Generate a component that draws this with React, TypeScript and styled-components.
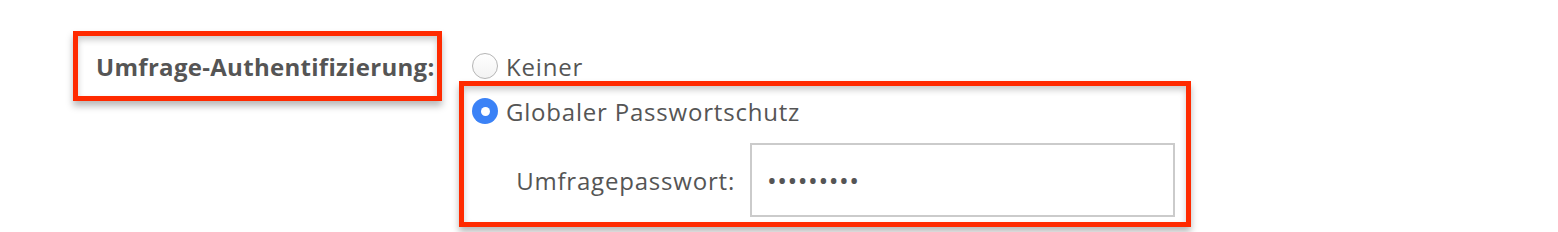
import React from 'react'
import styled, { createGlobalStyle } from 'styled-components'

const GlobalStyle = createGlobalStyle`
  html, body {
    margin: 0;
    padding: 0;
    background: #fff;
  }
  body {
    font-family: 'Open Sans', 'Noto Sans', Arial, sans-serif;
    color: #555;
  }
`

const Page = styled.div`
  width: 1558px;
  height: 232px;
  padding: 31px 0 0 73px;
  box-sizing: border-box;
  display: flex;
  align-items: flex-start;
`

// red annotation frame with its drop shadow
const Frame = styled.div`
  border: 5px solid #ff2a00;
  box-shadow: 0 5px 7px rgba(0, 0, 0, 0.28), inset 0 4px 6px rgba(0, 0, 0, 0.2);
  box-sizing: border-box;
`

const LabelFrame = styled(Frame)`
  width: 369px;
  height: 70px;
  display: flex;
  align-items: center;
  padding-left: 18px;
`

const FieldLabel = styled.label`
  font-size: 24px;
  font-weight: 700;
  color: #555;
  letter-spacing: 0.3px;
  white-space: nowrap;
`

const Options = styled.div`
  margin-left: 17px;
  display: flex;
  flex-direction: column;
  padding-top: 20px;
`

const OptionRow = styled.label`
  display: flex;
  align-items: center;
  gap: 8px;
  font-size: 24px;
  letter-spacing: 0.8px;
  color: #555;
  height: 30px;
  padding-left: 13px;
  white-space: nowrap;
`

const Radio = styled.span<{ checked?: boolean }>`
  width: 26px;
  height: 26px;
  border-radius: 50%;
  box-sizing: border-box;
  flex-shrink: 0;
  background: ${({ checked }) => (checked ? '#3b82f6' : 'linear-gradient(#fff, #f3f3f3)')};
  border: ${({ checked }) => (checked ? 'none' : '1px solid #b5b5b5')};
  display: flex;
  align-items: center;
  justify-content: center;

  &::after {
    content: '';
    display: ${({ checked }) => (checked ? 'block' : 'none')};
    width: 9px;
    height: 9px;
    border-radius: 50%;
    background: #fff;
  }
`

const AuthFrame = styled(Frame)`
  width: 732px;
  height: 146px;
  padding: 10px 11px 0 8px;
  display: flex;
  flex-direction: column;
`

const CheckedRow = styled(OptionRow)`
  padding-left: 0;
`

const PasswordRow = styled.div`
  display: flex;
  align-items: center;
  justify-content: flex-end;
  gap: 15px;
  margin-top: 17px;
`

const PasswordLabel = styled.label`
  font-size: 24px;
  letter-spacing: 0.8px;
  color: #555;
  white-space: nowrap;
`

const PasswordInput = styled.input`
  width: 425px;
  height: 74px;
  flex-shrink: 0;
  box-sizing: border-box;
  border: 2px solid #cbcbcb;
  padding: 0 15px;
  font-size: 26px;
  color: #555;
  font-family: inherit;
  letter-spacing: 0.5px;
  outline: none;
`

export default function App() {
  return (
    <>
      <GlobalStyle />
      <Page>
        <LabelFrame>
          <FieldLabel>Umfrage-Authentifizierung:</FieldLabel>
        </LabelFrame>

        <Options>
          <OptionRow>
            <Radio />
            Keiner
          </OptionRow>

          <AuthFrame>
            <CheckedRow>
              <Radio checked />
              Globaler Passwortschutz
            </CheckedRow>

            <PasswordRow>
              <PasswordLabel>Umfragepasswort:</PasswordLabel>
              <PasswordInput type="password" defaultValue="geheim123" readOnly />
            </PasswordRow>
          </AuthFrame>
        </Options>
      </Page>
    </>
  )
}
